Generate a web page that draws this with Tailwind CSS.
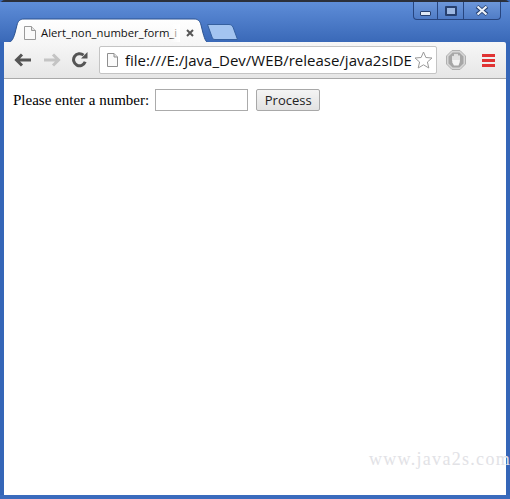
<!doctype html>
<html>
<head>
<meta charset="utf-8">
<script src="https://cdn.jsdelivr.net/npm/@tailwindcss/browser@4"></script>
<title>Alert_non_number_form_input</title>
</head>
<body class="w-[510px] h-[499px] overflow-hidden bg-[#3a6bbd]">
  <div class="relative w-[510px] h-[499px] flex flex-col rounded-t-[5px] border-t-2 border-[#2b2f3a] bg-[#3566b8]">
    <!-- title bar + tabs -->
    <div class="relative h-[40px] shrink-0 bg-gradient-to-b from-[#5e8dd8] to-[#3a69b8]">
      <!-- window buttons -->
      <div class="absolute top-0 left-[413px] w-[88px] h-[18px] flex rounded-b-[4px] border border-t-0 border-[#27457f] bg-gradient-to-b from-[#6d97da] to-[#4f7cc6]">
        <div class="w-[24px] flex items-center justify-center border-r border-[#27457f]">
          <div class="w-[11px] h-[5px] mt-[5px] rounded-[1px] border border-[#27406f] bg-[#dfe8f5]"></div>
        </div>
        <div class="w-[26px] flex items-center justify-center border-r border-[#27457f]">
          <div class="w-[12px] h-[10px] rounded-[1px] border-2 border-[#27406f] bg-[#9db8e2]"></div>
        </div>
        <div class="flex-1 flex items-center justify-center">
          <svg width="14" height="11" viewBox="0 0 14 11"><path d="M2 1.500 L12 9.500 M12 1.500 L2 9.500" stroke="#27406f" stroke-width="4"/><path d="M2.500 1.500 L11.500 9.500 M11.500 1.500 L2.500 9.500" stroke="#eef3fa" stroke-width="2.200"/></svg>
        </div>
      </div>
      <!-- active tab -->
      <svg class="absolute left-[6px] top-[16px]" width="204" height="25" viewBox="0 0 204 25">
        <defs>
          <linearGradient id="tabfill" x1="0" y1="0" x2="0" y2="1"><stop offset="0" stop-color="#ffffff"/><stop offset="1" stop-color="#f6f6f6"/></linearGradient>
        </defs>
        <path d="M0 25 C5 25 7 22 9 15 L11 7 C12 3 14 1 18 1 L188 1 C192 1 194 3 195 7 L197 15 C199 22 200 25 204 25 Z" fill="url(#tabfill)" stroke="#2c5391" stroke-width="1"/>
      </svg>
      <svg class="absolute left-[24px] top-[24px]" width="12" height="14" viewBox="0 0 12 14"><path d="M0.500 0.500 H7.500 L11.500 4.500 V13.500 H0.500 Z" fill="#fafafa" stroke="#9a9a9a"/><path d="M7.500 0.500 V4.500 H11.500" fill="#e4e4e4" stroke="#9a9a9a"/></svg>
      <div class="absolute left-[41px] top-[22px] whitespace-nowrap font-['Open_Sans',sans-serif] text-[11.300px] leading-[18px] text-[#111]">Alert_non_number_form_i</div>
      <div class="absolute left-[170px] top-[22px] w-[10px] h-[18px] bg-gradient-to-r from-white/0 to-white"></div>
      <svg class="absolute left-[186px] top-[27px]" width="8" height="8" viewBox="0 0 8 8"><path d="M1 1 L7 7 M7 1 L1 7" stroke="#555" stroke-width="2"/></svg>
      <!-- new tab button -->
      <svg class="absolute left-[206px] top-[22px]" width="33" height="16" viewBox="0 0 33 16"><path d="M1.500 0.500 H23 C25 0.500 26 1.500 27 3 L31.500 15.500 H9 C7 15.500 6.500 14.500 6 13 Z" fill="#a3c4f0" stroke="#35609f"/></svg>
    </div>
    <!-- browser body -->
    <div class="mx-[4px] w-[502px] flex-1 flex flex-col relative">
      <!-- toolbar -->
      <div class="h-[37px] shrink-0 flex items-center border-b border-[#a9a9a9] bg-gradient-to-b from-[#f7f7f7] to-[#e6e6e6] rounded-tr-[2px]">
        <svg class="ml-[10px]" width="18" height="14" viewBox="0 0 18 14"><path d="M8 1.500 L2.500 7 L8 12.500 M3 7 H17" fill="none" stroke="#555" stroke-width="3"/></svg>
        <svg class="ml-[11px]" width="18" height="14" viewBox="0 0 18 14"><path d="M10 1.500 L15.500 7 L10 12.500 M15 7 H1" fill="none" stroke="#c4c4c4" stroke-width="3"/></svg>
        <svg class="ml-[11px]" width="16" height="16" viewBox="0 0 16 16"><path d="M13.200 9.800 A6 6 0 1 1 11.500 3.200" fill="none" stroke="#555" stroke-width="3"/><path d="M9 6.500 L15.500 6.500 L15.500 0 Z" fill="#555"/></svg>
        <!-- omnibox -->
        <div class="ml-[11px] w-[338px] h-[28px] flex items-center rounded-[2px] border border-[#c4c4c4] bg-white overflow-hidden">
          <svg class="ml-[7px] shrink-0" width="11" height="14" viewBox="0 0 11 14"><path d="M0.500 0.500 H7 L10.500 4 V13.500 H0.500 Z" fill="#fafafa" stroke="#8f8f8f"/><path d="M7 0.500 V4 H10.500" fill="#e4e4e4" stroke="#8f8f8f"/></svg>
          <div class="ml-[7px] w-[287px] overflow-hidden whitespace-nowrap font-['Open_Sans',sans-serif] text-[15px] leading-[20px] text-[#111]">file:///E:/Java_Dev/WEB/release/java2sIDE</div>
          <svg class="ml-[2px] shrink-0" width="19" height="18" viewBox="0 0 19 18"><path d="M9.500 1 L11.900 6.500 L18 7 L13.400 11 L14.800 17 L9.500 13.800 L4.200 17 L5.600 11 L1 7 L7.100 6.500 Z" fill="#fff" stroke="#9a9a9a"/></svg>
        </div>
        <!-- adblock stop sign -->
        <svg class="ml-[9px]" width="20" height="20" viewBox="0 0 20 20"><path d="M6 0.500 H14 L19.500 6 V14 L14 19.500 H6 L0.500 14 V6 Z" fill="#d6d6d6" stroke="#b0b0b0"/><path d="M6.600 2.500 H13.400 L17.500 6.600 V13.400 L13.400 17.500 H6.600 L2.500 13.400 V6.600 Z" fill="#a6a6a6"/><path d="M7 10.500 V6.500 M9 10 V4.500 M11 10 V4.500 M13 10.500 V6" stroke="#f4f4f4" stroke-width="1.500" stroke-linecap="round"/><path d="M6.300 10 H13.800 V12 L12.500 15.500 H8 L6.300 12.500 Z" fill="#f4f4f4"/></svg>
        <!-- menu -->
        <div class="ml-[16px] w-[13px] flex flex-col gap-[2px]">
          <div class="h-[3px] bg-[#e03333]"></div>
          <div class="h-[3px] bg-[#e03333]"></div>
          <div class="h-[3px] bg-[#e03333]"></div>
        </div>
      </div>
      <!-- page -->
      <div class="flex-1 relative bg-white">
        <form class="flex items-center pt-[9px] pl-[9px] font-['Liberation_Serif',serif] text-[15px] leading-[24px] text-black">
          <label for="num">Please enter a number:</label>
          <input id="num" type="text" class="ml-[6px] w-[93px] h-[22px] border border-[#ababab] bg-white">
          <button type="button" class="ml-[8px] w-[64px] h-[22px] rounded-[2px] border border-[#a8a8a8] bg-gradient-to-b from-[#f4f4f4] to-[#e2e2e2] font-['Open_Sans',sans-serif] text-[13px] leading-[18px] text-[#222]">Process</button>
        </form>
        <div class="absolute left-[365px] top-[369px] whitespace-nowrap font-['Liberation_Serif',serif] text-[18px] tracking-[1.300px] leading-[22px] text-[#e2e2e6]">www.java2s.com</div>
      </div>
    </div>
    <div class="h-[4px] shrink-0 bg-[#3a6bbd]"></div>
  </div>
</body>
</html>
